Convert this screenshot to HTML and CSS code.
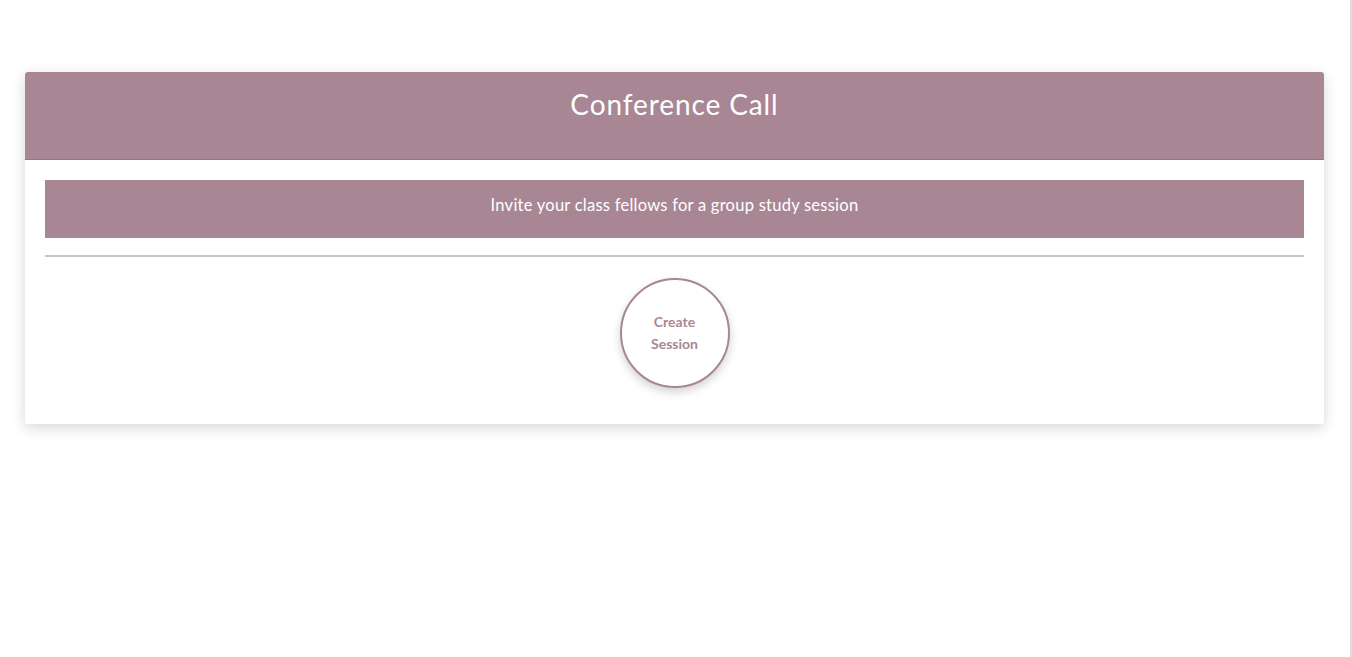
FILE: index.html
```html
<!DOCTYPE html>
<html>
<head>
<meta charset="utf-8">
<link rel="stylesheet" href="styles.css">
</head>
<body>
<div class="page">
  <div class="card">
    <div class="card-header">
      <h1 class="title">Conference Call</h1>
    </div>
    <div class="card-body">
      <div class="banner">Invite your class fellows for a group study session</div>
      <div class="rule"></div>
      <div class="action">
        <button class="circle-btn">Create<br>Session</button>
      </div>
    </div>
  </div>
</div>
</body>
</html>
```
FILE: styles.css
```css
html, body {
  margin: 0;
  padding: 0;
  background: #ffffff;
}
body {
  height: 657px;
  overflow: hidden;
  font-family: "Open Sans", "Lato", sans-serif;
}
.page {
  width: 1352px;
  height: 657px;
  border-right: 2px solid #dcdcdc;
  padding-top: 72px;
  box-sizing: border-box;
}
.card {
  margin-left: 25px;
  width: 1299px;
  background: #fff;
  border-radius: 3px;
  box-shadow: 0 4px 14px rgba(0,0,0,0.16);
  overflow: hidden;
}
.card-header {
  background: #a98694;
  border-bottom: 1px solid #96727f;
  height: 88px;
  box-sizing: border-box;
  padding-top: 16px;
}
.title {
  margin: 0;
  text-align: center;
  color: #ffffff;
  font-family: "Lato", sans-serif;
  font-weight: 400;
  font-size: 28px;
  line-height: 32px;
  letter-spacing: 0.9px;
}
.card-body {
  padding: 20px 20px 36px;
}
.banner {
  background: #a98694;
  color: #ffffff;
  font-family: "Lato", sans-serif;
  font-size: 16.5px;
  letter-spacing: 0.25px;
  text-align: center;
  height: 58px;
  box-sizing: border-box;
  padding-top: 14px;
  line-height: 22px;
}
.rule {
  margin-top: 17px;
  height: 2px;
  background: #c4c4c4;
}
.action {
  display: flex;
  justify-content: center;
  margin-top: 21px;
}
.circle-btn {
  width: 110px;
  height: 110px;
  border-radius: 50%;
  border: 2px solid #a98694;
  background: #fff;
  color: #a98694;
  font-family: "Lato", sans-serif;
  font-weight: 700;
  font-size: 14px;
  line-height: 22px;
  padding: 0;
  box-shadow: 0 4px 10px rgba(0,0,0,0.18);
  cursor: pointer;
}
```
